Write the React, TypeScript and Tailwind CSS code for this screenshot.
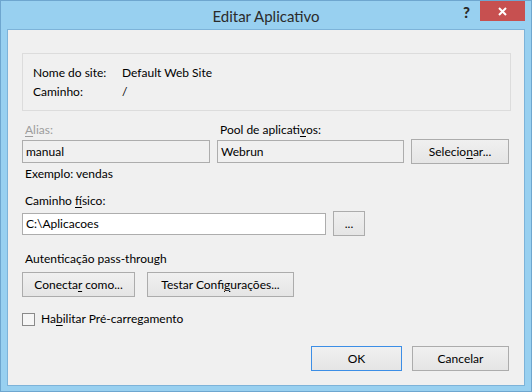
import { ReactNode } from "react"

const font = "font-['Lato','Liberation_Sans',sans-serif]"

function Btn({ children, className = "", primary = false }: { children: ReactNode; className?: string; primary?: boolean }) {
  return (
    <div
      className={
        "flex h-[25px] items-center justify-center border bg-gradient-to-b from-[#f0f0f0] to-[#e5e5e5] text-[12px] text-black " +
        (primary ? "border-[#3c8ee6]" : "border-[#acacac]") +
        " " +
        className
      }
    >
      <span>{children}</span>
    </div>
  )
}

function U({ children }: { children: ReactNode }) {
  return <span className="underline decoration-1 underline-offset-2">{children}</span>
}

export default function App() {
  return (
    <div className={"flex h-[392px] w-[532px] flex-col border border-[#6ea6cf] bg-[#98d0f0] " + font}>
      {/* title bar */}
      <div className="grid h-[28px] grid-cols-[1fr_auto_1fr]">
        <div />
        <div className="pt-[2px] text-[15px] leading-[26px] text-[#2b2b2b]">Editar Aplicativo</div>
        <div className="flex items-start justify-end pr-[6px]">
          <span className="mr-[10px] mt-[2px] text-[15px] font-black leading-[18px] text-[#2a2a2a]">?</span>
          <div className="flex h-[20px] w-[45px] items-center justify-center bg-[#c75050]">
            <svg width="9" height="9" viewBox="0 0 9 9">
              <path d="M1 1 L8 8 M8 1 L1 8" stroke="#fff" strokeWidth="2" />
            </svg>
          </div>
        </div>
      </div>

      {/* client area */}
      <div className="mx-[6px] mb-[5px] flex flex-1 flex-col border border-[#7db3d9] bg-[#f0f0f0] pl-[14px] pr-[15px] pt-[23px] text-[12px] text-black">
        <div className="mr-[-2px] h-[58px] border border-[#dcdcdc] pl-[10px] pt-[9px] leading-[19px]">
          <div className="flex">
            <span className="w-[89px]">Nome do site:</span>
            <span>Default Web Site</span>
          </div>
          <div className="flex">
            <span className="w-[89px]">Caminho:</span>
            <span>/</span>
          </div>
        </div>

        <div className="mt-[11px] flex leading-[16px]">
          <span className="w-[195px] pl-[3px] text-[#9d9d9d]">
            <U>A</U>lias:
          </span>
          <span className="pl-[3px]">
            Pool de aplicati<U>v</U>os:
          </span>
        </div>

        <div className="mt-[1px] flex h-[25px] items-start">
          <div className="mt-[1px] flex h-[23px] w-[188px] items-center border border-[#adadad] pl-[3px]">manual</div>
          <div className="ml-[7px] mt-[1px] flex h-[23px] w-[187px] items-center border border-[#adadad] pl-[3px]">Webrun</div>
          <Btn className="ml-[7px] w-[98px]">
            Selecio<U>n</U>ar...
          </Btn>
        </div>

        <div className="mt-[2px] pl-[3px] leading-[16px]">Exemplo: vendas</div>

        <div className="mt-[11px] pl-[3px] leading-[16px]">
          Caminho <U>f</U>ísico:
        </div>

        <div className="mt-[2px] flex h-[25px] items-start">
          <div className="mt-[2px] flex h-[22px] w-[304px] items-center border border-[#adadad] bg-white pl-[3px]">C:\Aplicacoes</div>
          <Btn className="ml-[7px] w-[32px]">...</Btn>
        </div>

        <div className="mt-[15px] pl-[3px] leading-[16px]">Autenticação pass-through</div>

        <div className="mt-[5px] flex">
          <Btn className="w-[113px]">
            Conecta<U>r</U> como...
          </Btn>
          <Btn className="ml-[12px] w-[147px]">
            Testar Confi<U>g</U>urações...
          </Btn>
        </div>

        <div className="mt-[14px] flex h-[16px] items-center">
          <div className="h-[13px] w-[13px] border border-[#8a8a8a] bg-[#f6f6f6]" />
          <span className="ml-[6px] leading-[16px]">
            Ha<U>b</U>ilitar Pré-carregamento
          </span>
        </div>

        <div className="mt-[19px] flex justify-end">
          <Btn primary className="w-[91px]">OK</Btn>
          <Btn className="ml-[10px] w-[97px]">Cancelar</Btn>
        </div>
      </div>
    </div>
  )
}
